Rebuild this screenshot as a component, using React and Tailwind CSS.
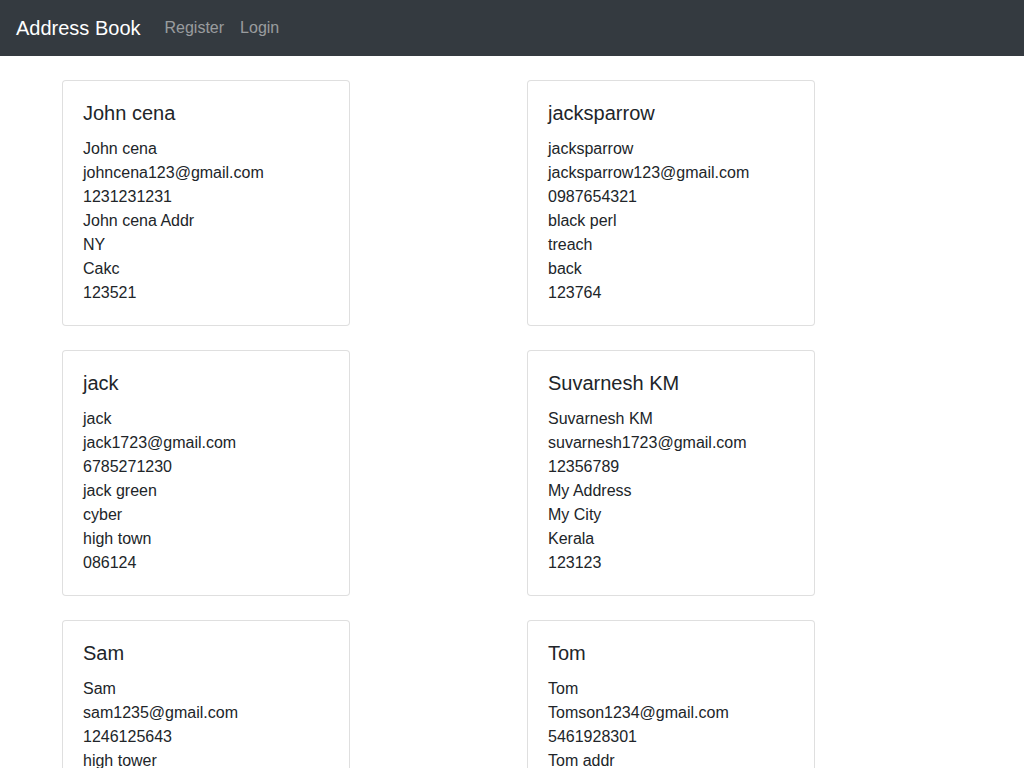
const contacts = [
  { name: "John cena", email: "johncena123@gmail.com", phone: "1231231231", address: "John cena Addr", city: "NY", state: "Cakc", pin: "123521" },
  { name: "jacksparrow", email: "jacksparrow123@gmail.com", phone: "0987654321", address: "black perl", city: "treach", state: "back", pin: "123764" },
  { name: "jack", email: "jack1723@gmail.com", phone: "6785271230", address: "jack green", city: "cyber", state: "high town", pin: "086124" },
  { name: "Suvarnesh KM", email: "suvarnesh1723@gmail.com", phone: "12356789", address: "My Address", city: "My City", state: "Kerala", pin: "123123" },
  { name: "Sam", email: "sam1235@gmail.com", phone: "1246125643", address: "high tower", city: "Sam City", state: "Kerala", pin: "123456" },
  { name: "Tom", email: "Tomson1234@gmail.com", phone: "5461928301", address: "Tom addr", city: "Tom City", state: "Kerala", pin: "654321" },
];

const ContactCard = ({ c }) => (
  <div className="w-[288px] border border-black/[0.125] rounded bg-white">
    <div className="p-5">
      <h5 className="text-[20px] leading-[24px] mb-3 font-normal">{c.name}</h5>
      <div className="text-base leading-6">
        <div>{c.name}</div>
        <div>{c.email}</div>
        <div>{c.phone}</div>
        <div>{c.address}</div>
        <div>{c.city}</div>
        <div>{c.state}</div>
        <div>{c.pin}</div>
      </div>
    </div>
  </div>
);

export default function App() {
  return (
    <div className="min-h-screen bg-white text-[#212529] font-['Liberation_Sans',Arial,sans-serif]">
      <nav className="h-14 bg-[#343a40] flex items-center px-4">
        <span className="text-white text-[20px] leading-[30px] mr-4">Address Book</span>
        <a className="text-white/50 text-base px-2 leading-6">Register</a>
        <a className="text-white/50 text-base px-2 leading-6">Login</a>
      </nav>
      <div className="pl-[62px] pt-6 grid grid-cols-[465px_465px] gap-y-6">
        {contacts.map((c, i) => (
          <ContactCard key={i} c={c} />
        ))}
      </div>
    </div>
  );
}
